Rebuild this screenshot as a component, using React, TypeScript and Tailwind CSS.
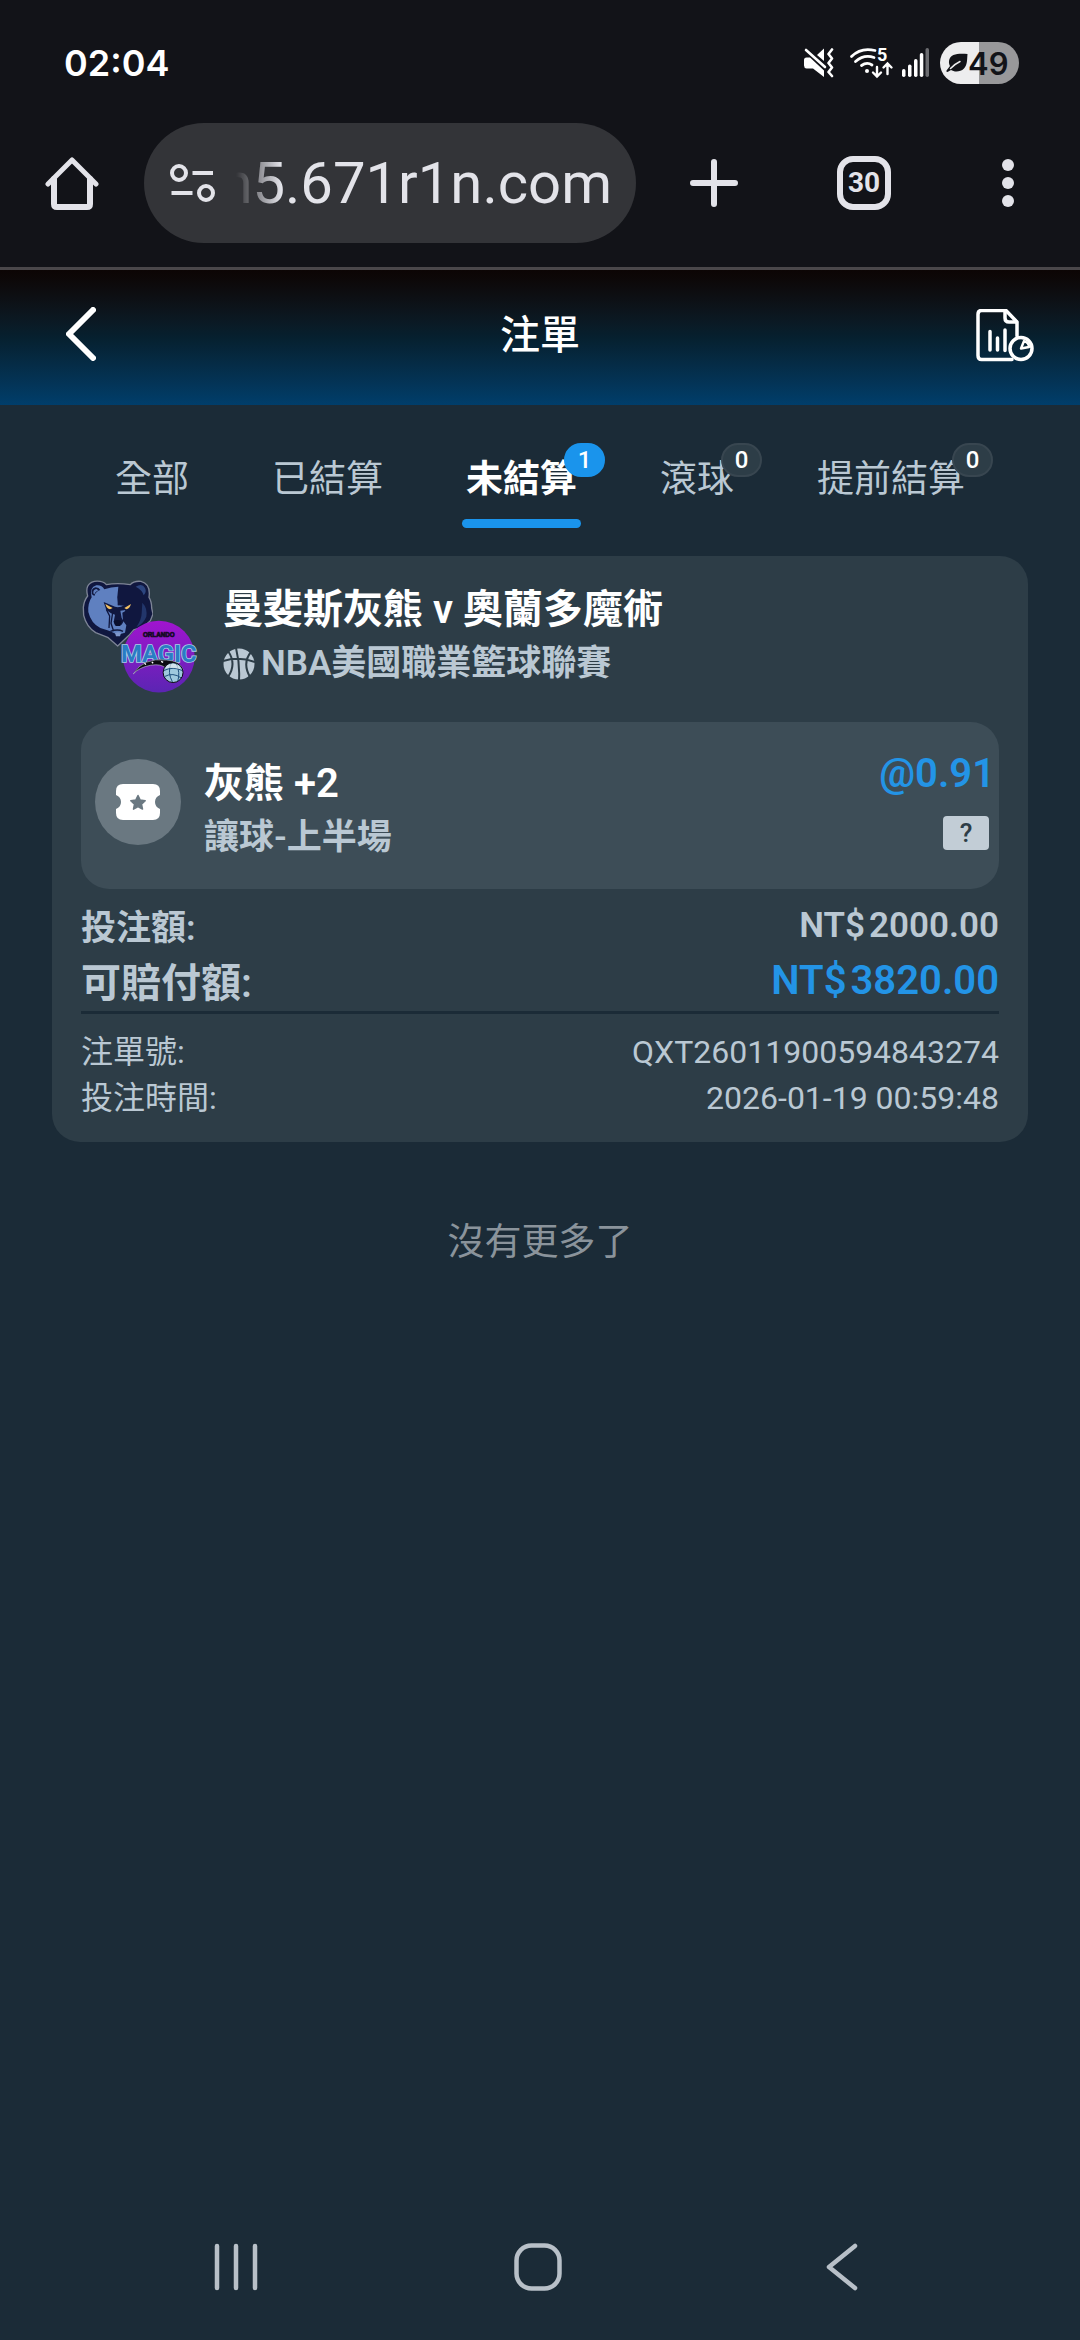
import { useState } from "react";
import type { ReactNode } from "react";
import clsx from "clsx";

const tabs = [
	{ label: "全部" },
	{ label: "已結算" },
	{ label: "未結算", count: 1 },
	{ label: "滾球", count: 0 },
	{ label: "提前結算", count: 0 },
];

const bet = {
	match: "曼斐斯灰熊 v 奧蘭多魔術",
	league: "NBA美國職業籃球聯賽",
	pick: "灰熊 +2",
	market: "讓球-上半場",
	odds: "@0.91",
	stake: "2000.00",
	payout: "3820.00",
	orderNo: "QXT26011900594843274",
	time: "2026-01-19 00:59:48",
};

function MuteIcon() {
	return (
		<svg width="30" height="30" viewBox="0 0 30 30" fill="white" aria-hidden="true">
			<path d="M13 7 20 .5V13z" />
			<path d="M0 12q0-2.5 2.500-2.500H6L20 22.500V29L9 20.500H2.500Q0 20 0 17.500z" />
			<path d="M2 2 21 19" stroke="white" strokeWidth="2.600" strokeLinecap="round" />
			<path
				d="m28 1.500-3.500 4.500 3.500 4.500-3.500 4.500 3.500 4.500-3.500 4.500 3.500 4"
				fill="none"
				stroke="white"
				strokeWidth="2.600"
				strokeLinecap="round"
				strokeLinejoin="round"
			/>
		</svg>
	);
}

function WifiIcon() {
	return (
		<svg
			width="42"
			height="32"
			viewBox="0 0 42 32"
			fill="none"
			stroke="white"
			strokeWidth="2.800"
			strokeLinecap="round"
			aria-hidden="true"
			className="overflow-visible"
		>
			<path d="M1.500 9.500Q11 0 25 3.500M5.500 14.500Q14 7 24 10.500M11.500 18.500Q17 14.500 22 18" />
			<circle cx="17" cy="24" r="2" fill="white" stroke="none" />
			<path d="M27 20v9m-4-3.500 4 4 4-4M37.500 27V17m-4 3.500 4-4 4 4" strokeWidth="2.400" />
			<text x="27" y="14" fill="white" stroke="none" className="font-[Roboto,sans-serif] text-[18px] font-bold">
				5
			</text>
		</svg>
	);
}

function SignalIcon() {
	return (
		<svg width="28" height="30" viewBox="0 0 28 30" fill="white" aria-hidden="true">
			<rect x="0" y="21" width="3.500" height="8" rx="1.700" />
			<rect x="6" y="16.500" width="3.500" height="12.500" rx="1.700" />
			<rect x="12" y="11" width="3.500" height="18" rx="1.700" />
			<rect x="17.800" y="5" width="3.500" height="24" rx="1.700" />
			<rect x="23.500" y="0" width="3.500" height="29" rx="1.700" fill="#6b6c70" />
		</svg>
	);
}

function LeafIcon() {
	return (
		<svg width="22" height="20" viewBox="0 0 22 20" fill="#121318" aria-hidden="true">
			<path d="M21.500 1C14 .5 4 0 3 8c-.3 2.500.5 4 1 5L.5 17.500Q0 19 1.500 19L5 17c3 2 9 2.500 13-1.500 3.500-3.500 3-9 3.500-14.500z" />
			<path d="M4.500 15.500Q8 11.500 14 8.500" fill="none" stroke="#ededee" strokeWidth="1.500" strokeLinecap="round" />
		</svg>
	);
}

function HomeIcon() {
	return (
		<svg width="54" height="54" viewBox="0 0 54 54" fill="none" stroke="#e3e3e9" strokeWidth="6" strokeLinecap="round" strokeLinejoin="round" aria-hidden="true">
			<path d="M3 28 27 4l24 24" strokeWidth="5" />
			<path d="M9 23v25q0 3 3 3h30q3 0 3-3V23" />
		</svg>
	);
}

function TuneIcon() {
	return (
		<svg width="46" height="40" viewBox="0 0 46 40" fill="none" stroke="#e3e3e9" strokeWidth="4" aria-hidden="true" className="shrink-0">
			<circle cx="9" cy="10" r="7" />
			<circle cx="36" cy="30" r="7" />
			<path d="M22.500 10H43M1.500 30H22.500" />
		</svg>
	);
}

function ReportIcon() {
	return (
		<svg width="58" height="53" viewBox="0 0 58 53" fill="none" stroke="white" strokeWidth="3.500" strokeLinecap="round" strokeLinejoin="round" aria-hidden="true">
			<path d="M36 50.500H5.500q-3.500 0-3.500-4v-41q0-4 3.500-4H30L41 13v14" />
			<path d="M29 2v7q0 4 4 4h7.500" />
			<path d="M14 22.500V41M21.500 29v12M29 21v20.500" />
			<circle cx="45" cy="39.500" r="11" />
			<path d="m45 39.500 3-7.500q5 2 5 6z" strokeWidth="2.400" />
		</svg>
	);
}

function GrizzliesLogo() {
	return (
		<svg width="72" height="68" viewBox="120 118 216 204" aria-hidden="true" strokeLinejoin="round">
			<path
				d="M140 166Q130 130 160 122q25-3 36 10 32-6 72 0 10-12 32-10 30 8 24 48 8 12 8 32l4 18-8 20-20 18-30 10-14 16-34 32-30-26-36-14q-28-18-36-52l-1-24q2-20 13-34z"
				fill="#10173f"
				stroke="#7d8496"
				strokeWidth="4"
			/>
			<path
				d="M152 170q-8-30 14-36 16-2 24 12 20-8 42-8l-3 30 3 26 24 2-4 16-8 4 2 24 10 14-4 22-22 6-26-12-26-8q-28-14-36-48-2-26 10-44z"
				fill="#5f80c0"
			/>
			<path d="M152 160q-2-18 12-20 10 0 14 8-14 4-18 18z" fill="#10173f" />
			<path d="M157 158q-1-12 9-13l6 4q-10 4-12 12z" fill="#5f80c0" />
			<path d="M284 138q20-12 28 4 6 12-4 22-4-16-24-26z" fill="#2c457f" />
			<path d="M304 186q16 16 12 42-8 20-30 32 16-24 16-42z" fill="#22366b" />
			<path d="m188 184 34 14 8 2 10-2 32-14-8 14-10 10-16 2 4 22 6 10-6 10-20 2-4-10 4-22-12-4-14-10z" fill="#10173f" />
			<path d="m193 190 22 12-8 4q-10-2-14-16zM270 190l-20 12 6 4q10-2 14-16z" fill="#f2c063" />
			<path d="M232 168v26M216 210l-6 38 8 24M196 206l10 20-2 36M208 272q22-8 38 0" fill="none" stroke="#10173f" strokeWidth="4" />
			<path d="M218 242q10-8 24 0l-4 14h-14z" fill="#0a0f2d" />
			<path d="M222 277q10-4 18 0l-3 10h-12z" fill="#7e96cc" />
		</svg>
	);
}

function MagicLogo() {
	return (
		<svg width="73" height="74" viewBox="250 240 220 222" aria-hidden="true" className="overflow-visible">
			<defs>
				<linearGradient id="magic" x1="0" y1="0" x2="0" y2="1">
					<stop offset="0" stopColor="#a114cf" />
					<stop offset="1" stopColor="#5b25b3" />
				</linearGradient>
			</defs>
			<circle cx="361" cy="350" r="108" fill="url(#magic)" />
			<text x="361" y="291" textAnchor="middle" fill="#140a24" stroke="#140a24" strokeWidth="2" className="font-['Liberation_Sans',sans-serif] text-[19px] font-bold">
				ORLANDO
			</text>
			<text
				x="361"
				y="366"
				textAnchor="middle"
				fill="#2a7cc4"
				stroke="#a9cfe6"
				strokeWidth="5"
				paintOrder="stroke"
				className="font-[Roboto,sans-serif] text-[72px] font-bold"
			>
				MAGIC
			</text>
			<path d="M284 402q30-50 100-42 40 2 50 30l-50-4q-16-16-48-10-34 6-52 26z" fill="#0b0b12" stroke="#b4bcc8" strokeWidth="2" />
			<path d="m318 370 4 4m18-8 4 4m24-6 6 3" stroke="white" strokeWidth="4" />
			<circle cx="404" cy="398" r="30" fill="#9fc9de" stroke="#0b0b12" strokeWidth="3" />
			<path d="M376 392q28-14 56 0M378 410q26-14 50 4M398 370q-12 28 4 56M414 372q12 26 4 52" fill="none" stroke="#1d4f7c" strokeWidth="3" />
			<path d="M386 376q18-10 36 2l4 10q-24-8-46-2z" fill="#e8eef2" opacity=".7" />
		</svg>
	);
}

function BasketballIcon() {
	return (
		<svg width="32" height="32" viewBox="0 0 32 32" aria-hidden="true" className="shrink-0">
			<circle cx="16" cy="16" r="15.500" fill="#bac8d3" />
			<path d="M13 0q4 16 3 32M0 13q16-5 32 1M5 3q9 13 0 26M28 4q-9 11-1 25" fill="none" stroke="#2d3d47" strokeWidth="2" />
		</svg>
	);
}

function TicketIcon() {
	return (
		<svg width="44" height="36" viewBox="0 0 44 36" aria-hidden="true">
			<path d="M7 0h30q7 0 7 7v4q-5 2-5 7t5 7v4q0 7-7 7H7q-7 0-7-7v-4q5-2 5-7t-5-7V7q0-7 7-7z" fill="white" />
			<path
				d="m22 11.500 2.200 4.600 5 .6-3.700 3.400 1 5L22 22.600l-4.500 2.500 1-5-3.700-3.400 5-.6z"
				fill="#6a7881"
				stroke="#6a7881"
				strokeWidth="1.500"
				strokeLinejoin="round"
			/>
		</svg>
	);
}

function BrowserBar() {
	return (
		<header className="border-b-3 border-[#4a474a] bg-[#121318] pt-[42px] pb-6">
			<div className="flex h-[42px] items-center pr-[61px] pl-16 text-white">
				<time className="mr-auto font-[Inter,sans-serif] text-[36px] font-semibold">02:04</time>
				<div className="flex items-center">
					<MuteIcon />
					<span className="ml-4">
						<WifiIcon />
					</span>
					<span className="ml-2.5">
						<SignalIcon />
					</span>
					<span className="ml-2.5 flex h-[42px] w-[79px] items-center rounded-full bg-linear-to-r from-[#ededee] from-50% to-[#98989a] to-50% pl-1.5 text-[#121318]">
						<LeafIcon />
						<span className="font-[Inter,sans-serif] text-[31px] leading-none font-semibold">49</span>
					</span>
				</div>
			</div>
			<div className="mt-[39px] flex h-[120px] items-center pl-[45px]">
				<button type="button" aria-label="Home">
					<HomeIcon />
				</button>
				<div className="ml-[45px] flex h-full min-w-0 flex-1 items-center rounded-full bg-[#333438] pr-6 pl-[26px]">
					<TuneIcon />
					<div className="ml-5 flex flex-1 justify-end overflow-hidden mask-l-from-88% mask-l-to-100%">
						<input
							type="text"
							aria-label="Address"
							defaultValue="n5.671r1n.com"
							className="w-[480px] shrink-0 bg-transparent text-right font-[Roboto,sans-serif] text-[58px] leading-[80px] text-[#e3e3e9] outline-none"
						/>
					</div>
				</div>
				<button type="button" aria-label="New tab" className="flex w-[156px] justify-center">
					<svg width="48" height="48" viewBox="0 0 48 48" stroke="#e3e3e9" strokeWidth="6" strokeLinecap="round">
						<path d="M24 3v42M3 24h42" />
					</svg>
				</button>
				<button type="button" aria-label="Tabs" className="flex w-36 justify-center">
					<span className="flex size-[54px] items-center justify-center rounded-[16px] border-6 border-[#e3e3e9] font-[Roboto,sans-serif] text-[28px] font-bold text-[#e3e3e9]">
						30
					</span>
				</button>
				<button type="button" aria-label="Menu" className="flex w-36 justify-center">
					<svg width="12" height="48" viewBox="0 0 12 48" fill="#e3e3e9">
						<circle cx="6" cy="6" r="6" />
						<circle cx="6" cy="24" r="6" />
						<circle cx="6" cy="42" r="6" />
					</svg>
				</button>
			</div>
		</header>
	);
}

function Money({ value }: { value: string }) {
	return (
		<span className="flex gap-1">
			<span>NT$</span>
			<span>{value}</span>
		</span>
	);
}

function Row({ label, className, children }: { label: string; className: string; children: ReactNode }) {
	return (
		<div className={clsx("flex items-start justify-between", className)}>
			<dt>{label}:</dt>
			<dd>{children}</dd>
		</div>
	);
}

function BetCard() {
	return (
		<article className="mx-[52px] rounded-[28px] bg-[#2d3d47] px-[29px] pt-6 pb-[21px] text-[#bac8d3]">
			<div className="flex items-center gap-7">
				<div className="relative size-[114px] shrink-0">
					<GrizzliesLogo />
					<span className="absolute right-0 bottom-0">
						<MagicLogo />
					</span>
				</div>
				<div className="leading-[54px] font-semibold">
					<h2 className="text-[40px] text-white">{bet.match}</h2>
					<p className="flex items-center gap-1.5 text-[35px]">
						<BasketballIcon />
						{bet.league}
					</p>
				</div>
			</div>

			<div className="mt-7 flex items-start rounded-[28px] bg-[#3d4d57] pr-1 pb-6 pl-3.5">
				<span className="mt-[37px] flex size-[86px] items-center justify-center rounded-full bg-[#6a7881]">
					<TicketIcon />
				</span>
				<div className="ml-[23px] pt-[35px] leading-[54px] font-semibold">
					<h3 className="text-[40px] text-white">{bet.pick}</h3>
					<p className="text-[35px]">{bet.market}</p>
				</div>
				<div className="ml-auto flex flex-col items-end pt-7">
					<span className="text-[40px] leading-[48px] font-semibold text-[#2394e6]">{bet.odds}</span>
					<button
						type="button"
						aria-label="Help"
						className="mt-[18px] mr-1.5 h-[34px] w-[46px] rounded-sm bg-[#c2cdd6] text-[26px] leading-[34px] font-medium text-[#2d3d47]"
					>
						?
					</button>
				</div>
			</div>

			<dl className="mt-3">
				<Row label="投注額" className="text-[35px] leading-[55px] font-semibold">
					<div className="leading-[49px]">
						<Money value={bet.stake} />
					</div>
				</Row>
				<Row label="可賠付額" className="border-b-3 border-[#1b2b37] text-[40px] leading-[55px] font-semibold">
					<div className="leading-[49px] text-[#2394e6]">
						<Money value={bet.payout} />
					</div>
				</Row>
				<Row label="注單號" className="mt-[15px] text-[32px] leading-[46px]">
					{bet.orderNo}
				</Row>
				<Row label="投注時間" className="text-[32px] leading-[46px]">
					{bet.time}
				</Row>
			</dl>
		</article>
	);
}

export default function App() {
	const [active, setActive] = useState("未結算");

	return (
		<div className="flex min-h-screen flex-col bg-[#1b2b37] font-[Roboto,'Noto_Sans_CJK_TC',sans-serif]">
			<BrowserBar />

			<div className="flex h-[135px] items-center justify-between bg-linear-to-b from-[#0c0504] via-[#06202f] to-[#003e6b] pr-[46px] pb-1 pl-[66px] text-white">
				<button type="button" aria-label="Back" className="w-[78px] pb-1">
					<svg width="30" height="54" viewBox="0 0 30 54" fill="none" stroke="white" strokeWidth="6" strokeLinecap="round" strokeLinejoin="round">
						<path d="M27 3 3 27l24 24" />
					</svg>
				</button>
				<h1 className="text-[40px] font-medium">注單</h1>
				<button type="button" aria-label="Report" className="flex w-[98px] justify-end">
					<ReportIcon />
				</button>
			</div>

			<nav className="flex justify-center gap-[83px] pt-[45px] pb-7">
				{tabs.map((tab) => (
					<button
						key={tab.label}
						type="button"
						onClick={() => setActive(tab.label)}
						className={clsx(
							"relative flex h-[78px] items-start text-[37px] leading-[60px]",
							tab.label === active ? "font-semibold text-white" : "text-[#bac8d3]",
						)}
					>
						{tab.label}
						{tab.count !== undefined && (
							<span
								className={clsx(
									"absolute -top-[7px] left-full -ml-[13px] flex h-[34px] w-[41px] items-center justify-center rounded-full border-2 text-[24px] leading-none font-medium text-white",
									tab.count > 0 ? "border-[#1a94ec] bg-[#1a94ec]" : "border-[#384650] bg-[#2d3d47]",
								)}
							>
								{tab.count}
							</span>
						)}
						{tab.label === active && <span className="absolute -inset-x-1 bottom-0 h-[9px] rounded-full bg-[#1a94ec]" />}
					</button>
				))}
			</nav>

			<BetCard />

			<p className="mt-[72px] text-center text-[37px] leading-[58px] text-[#8a939b]">沒有更多了</p>

			<div className="mt-auto flex h-[146px] items-center justify-center gap-64 text-[#b8c0c8]">
				<button type="button" aria-label="Recents">
					<svg width="44" height="48" viewBox="0 0 44 48" stroke="currentColor" strokeWidth="4.500" strokeLinecap="round">
						<path d="M3 3v42M22 3v42M41 3v42" />
					</svg>
				</button>
				<button type="button" aria-label="Home screen">
					<svg width="48" height="48" viewBox="0 0 48 48" fill="none" stroke="currentColor" strokeWidth="4.500">
						<rect x="2.500" y="2.500" width="43" height="43" rx="15" />
					</svg>
				</button>
				<button type="button" aria-label="Go back">
					<svg width="48" height="48" viewBox="0 0 48 48" fill="none" stroke="currentColor" strokeWidth="4.500" strokeLinecap="round" strokeLinejoin="round">
						<path d="M37 3 11 24l26 21" />
					</svg>
				</button>
			</div>
		</div>
	);
}
